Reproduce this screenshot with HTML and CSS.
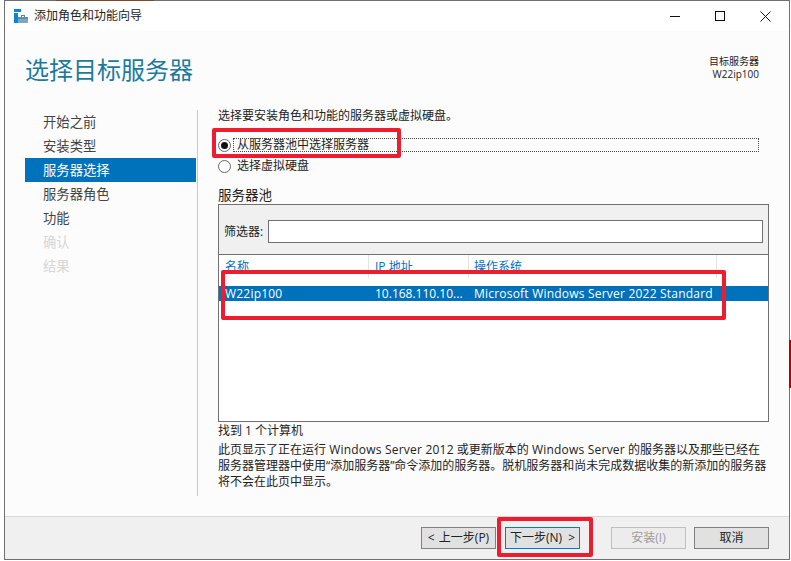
FILE: index.html
```html
<!DOCTYPE html>
<html lang="zh-CN">
<head>
    <meta charset="UTF-8">
    <title>添加角色和功能向导</title>
    <link rel="stylesheet" href="styles.css">
</head>
<body>
    <div class="window">
        <div class="titlebar">
            <svg class="app-icon" width="15" height="15" viewBox="0 0 15 15">
                <rect x="0" y="0" width="7" height="3" fill="#0a84d6"/>
                <rect x="0" y="4" width="4" height="10" fill="#0a84d6"/>
                <path d="M4 8h10v2H4z" fill="#5a8fb0"/>
                <path d="M4 10h10v4H4z" fill="#7fa6bf"/>
                <path d="M7 8V6h4v2h-1V7H8v1z" fill="#5a7f99"/>
            </svg>
            <span class="window-title">添加角色和功能向导</span>
            <div class="window-controls">
                <svg class="ctl ctl-min" width="10" height="10" viewBox="0 0 10 10"><path d="M0 5.5h10" stroke="#111" fill="none"/></svg>
                <svg class="ctl ctl-max" width="10" height="10" viewBox="0 0 10 10"><rect x="0.5" y="0.5" width="9" height="9" stroke="#111" fill="none"/></svg>
                <svg class="ctl ctl-close" width="11" height="11" viewBox="0 0 11 11"><path d="M0.5 0.5l10 10M10.5 0.5l-10 10" stroke="#111" fill="none"/></svg>
            </div>
        </div>

        <div class="content">
            <div class="page-header">
                <h1>选择目标服务器</h1>
                <div class="target">
                    <div>目标服务器</div>
                    <div>W22ip100</div>
                </div>
            </div>

            <div class="wizard">
                <ul class="steps">
                    <li>开始之前</li>
                    <li>安装类型</li>
                    <li class="active">服务器选择</li>
                    <li>服务器角色</li>
                    <li>功能</li>
                    <li class="disabled">确认</li>
                    <li class="disabled">结果</li>
                </ul>

                <div class="main">
                    <p class="intro">选择要安装角色和功能的服务器或虚拟硬盘。</p>

                    <div class="radio-row">
                        <span class="radio checked"></span>
                        <span class="radio-label focused">从服务器池中选择服务器</span>
                    </div>
                    <div class="radio-row">
                        <span class="radio"></span>
                        <span class="radio-label">选择虚拟硬盘</span>
                    </div>

                    <h2>服务器池</h2>
                    <div class="pool">
                        <div class="filter">
                            <label for="filter">筛选器:</label>
                            <input type="text" id="filter">
                        </div>
                        <div class="grid-head">
                            <div class="col col-name">名称</div>
                            <div class="col col-ip">IP 地址</div>
                            <div class="col col-os">操作系统</div>
                            <div class="col col-rest"></div>
                        </div>
                        <div class="grid-row">
                            <div class="col col-name latin">W22ip100</div>
                            <div class="col col-ip">10.168.110.10...</div>
                            <div class="col col-os latin">Microsoft Windows Server 2022 Standard</div>
                        </div>
                    </div>

                    <p class="found">找到 1 个计算机</p>
                    <p class="note">此页显示了正在运行 <span class="latin">Windows Server 2012</span> 或更新版本的 <span class="latin">Windows Server</span> 的服务器以及那些已经在<br>服务器管理器中使用“添加服务器”命令添加的服务器。脱机服务器和尚未完成数据收集的新添加的服务器<br>将不会在此页中显示。</p>
                </div>
            </div>
        </div>

        <div class="footer">
            <button type="button" class="btn btn-prev">&lt; 上一步(P)</button>
            <button type="button" class="btn btn-next">下一步(N) &gt;</button>
            <button type="button" class="btn btn-install" disabled>安装(I)</button>
            <button type="button" class="btn">取消</button>
        </div>
    </div>

    <!-- annotations drawn over the screenshot -->
    <div class="mark mark-radio"></div>
    <div class="mark mark-row"></div>
    <div class="mark mark-next"></div>
    <div class="edge-strip"></div>
    <div class="edge-bar"></div>
</body>
</html>
```

FILE: styles.css
```css
* {
    box-sizing: border-box;
}
html, body {
    height: 100%;
}
body {
    margin: 0;
    background: #fff;
    overflow: hidden;
    font-family: "Open Sans", "Noto Sans CJK SC", sans-serif;
    font-size: 12px;
    color: #222;
}
.latin {
    letter-spacing: 0.21px;
}
.window {
    width: 786px;
    height: 560px;
    margin-left: 4px;
    border: 1px solid #707070;
    display: flex;
    flex-direction: column;
}
.titlebar {
    height: 30px;
    background: #fff;
    display: flex;
    align-items: center;
    padding-left: 9px;
    flex: none;
}
.app-icon {
    margin-right: 5px;
}
.window-title {
    font-size: 12px;
    line-height: 16px;
}
.window-controls {
    margin-left: auto;
    display: flex;
    align-items: center;
    padding-right: 18px;
    gap: 35px;
}
.content {
    flex: 1;
    background: #fcfcfc;
    padding: 0 20px;
    display: flex;
    flex-direction: column;
}
.page-header {
    height: 77px;
    display: flex;
    justify-content: space-between;
    flex: none;
}
h1 {
    margin: 21px 0 0;
    font-size: 24px;
    line-height: 36px;
    font-weight: 400;
    color: #1b7a9f;
}
.target {
    margin: 24px 10px 0 0;
    text-align: right;
    font-size: 10px;
    line-height: 13px;
}
.wizard {
    flex: 1;
    display: flex;
    align-items: flex-start;
}
.steps {
    list-style: none;
    margin: 2px 0 0;
    padding: 0;
    width: 173px;
    height: 386px;
    flex: none;
    border-right: 1px solid #c8c8c8;
}
.steps li {
    height: 24px;
    line-height: 24px;
    padding-left: 18px;
    font-size: 13.33px;
    color: #444;
}
.steps .active {
    background: #0072bc;
    color: #fff;
    margin-right: 1px;
}
.steps .disabled {
    color: #d6d6d6;
}
.main {
    flex: 1;
    padding-left: 20px;
}
.intro {
    margin: 0 0 13px;
    line-height: 16px;
}
.radio-row {
    display: flex;
    align-items: center;
    height: 16px;
    margin-bottom: 5px;
}
.radio {
    width: 13px;
    height: 13px;
    border: 1px solid #666;
    border-radius: 50%;
    background: #fff;
    margin-right: 2px;
    flex: none;
    display: flex;
    align-items: center;
    justify-content: center;
}
.radio.checked::after {
    content: "";
    width: 7px;
    height: 7px;
    border-radius: 50%;
    background: #111;
}
.radio-label {
    padding-left: 4px;
    line-height: 14px;
}
.radio-label.focused {
    flex: 1;
    margin-right: 10px;
    outline: 1px dotted #444;
    outline-offset: -1px;
}
h2 {
    margin: 13px 0 1px;
    font-size: 13.5px;
    line-height: 16px;
    font-weight: 400;
}
.pool {
    height: 218px;
    border: 1px solid #707070;
    background: #fff;
}
.filter {
    height: 50px;
    background: #f0f0f0;
    border-bottom: 1px solid #707070;
    display: flex;
    align-items: flex-start;
    padding: 15px 5px 0;
}
.filter label {
    line-height: 23px;
    width: 44px;
    flex: none;
}
.filter input {
    flex: 1;
    height: 23px;
    border: 1px solid #707070;
    background: #fff;
    padding: 0 4px;
}
.grid-head {
    display: flex;
    height: 23px;
    color: #0072c6;
}
.grid-head .col {
    line-height: 24px;
    border-right: 1px solid #e4e4e4;
}
.grid-head .col-rest {
    border-right: 0;
    flex: 1;
}
.grid-row {
    display: flex;
    height: 15px;
    margin-top: 8px;
    background: #0072bc;
    color: #fff;
    line-height: 16px;
    white-space: nowrap;
}
.col-name {
    width: 150px;
    padding-left: 6px;
}
.col-ip {
    width: 100px;
    padding-left: 6px;
}
.col-os {
    width: 248px;
    padding-left: 5px;
}
.found {
    margin: 0;
    padding-top: 1px;
    line-height: 15px;
}
.note {
    margin: 4px 0 0;
    line-height: 16px;
    white-space: nowrap;
}
.footer {
    height: 43px;
    flex: none;
    background: #f0f0f0;
    border-top: 1px solid #d8d8d8;
    display: flex;
    justify-content: flex-end;
    padding: 10px 20px 0 0;
}
.btn {
    width: 75px;
    height: 22px;
    padding: 0;
    margin-left: 8px;
    background: #e1e1e1;
    border: 1px solid #808080;
    font-family: inherit;
    font-size: 12px;
    line-height: 18px;
    color: #222;
}
.btn-prev {
    word-spacing: 1px;
}
.btn-next {
    border-color: #0078d7;
    margin-left: 9px;
    margin-right: 23px;
    word-spacing: 3px;
}
.btn-install {
    background: #ececec;
    border-color: #bfbfbf;
    color: #9c9c9c;
}
.mark {
    position: absolute;
    border: 4px solid #ed1c2e;
    border-radius: 2px;
}
.mark-radio {
    left: 212px;
    top: 128px;
    width: 189px;
    height: 30px;
}
.mark-row {
    left: 221px;
    top: 270px;
    width: 505px;
    height: 50px;
}
.mark-next {
    left: 497px;
    top: 517px;
    width: 96px;
    height: 40px;
}
.edge-strip {
    position: absolute;
    left: 56px;
    top: 0;
    width: 98px;
    height: 1px;
    background: #7a4a2a;
}
.edge-bar {
    position: absolute;
    left: 789px;
    top: 340px;
    width: 2px;
    height: 48px;
    background: #c00000;
}
```
